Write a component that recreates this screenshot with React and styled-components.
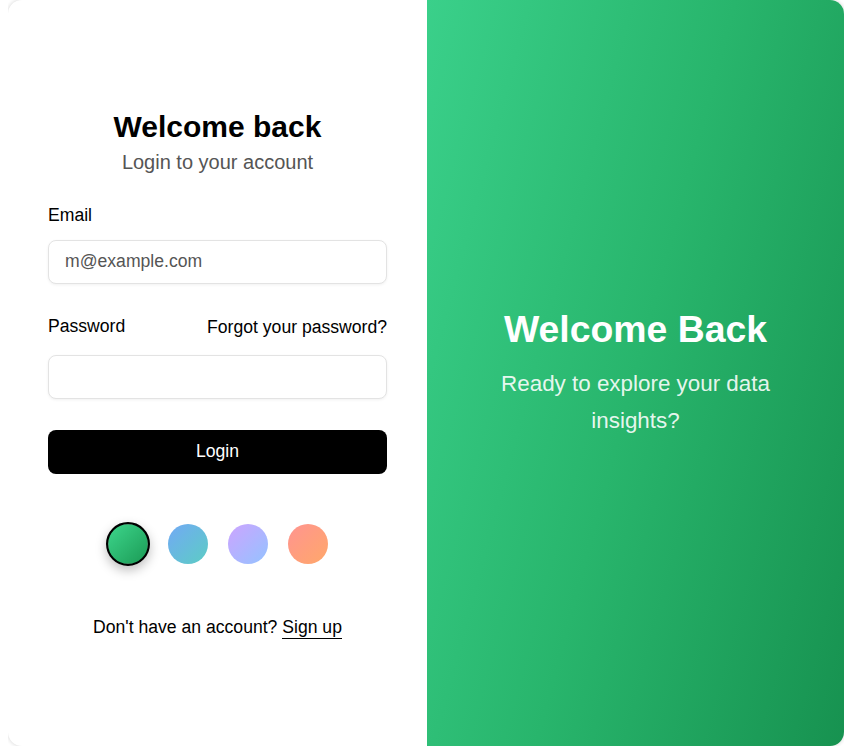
import React, { useState } from "react";
import styled, { createGlobalStyle } from "styled-components";

const GlobalStyle = createGlobalStyle`
  * {
    box-sizing: border-box;
  }

  body {
    margin: 0 0 0 8px;
    font-family: "Liberation Sans", Arial, sans-serif;
    background: #fff;
    overflow: hidden;
  }
`;

const themes = [
  { id: "green", swatch: "linear-gradient(135deg, #3dd68c, #1b9a55)", panel: "linear-gradient(105deg, #3ad08a 0%, #28b56c 50%, #179250 100%)" },
  { id: "blue", swatch: "linear-gradient(135deg, #72a9f5, #5ccdc4)", panel: "linear-gradient(105deg, #72a9f5, #5ccdc4)" },
  { id: "purple", swatch: "linear-gradient(135deg, #cda4ff, #94c3ff)", panel: "linear-gradient(105deg, #cda4ff, #94c3ff)" },
  { id: "peach", swatch: "linear-gradient(135deg, #ff9490, #ffa86a)", panel: "linear-gradient(105deg, #ff9490, #ffa86a)" },
];

const Card = styled.div`
  width: 836px;
  height: 746px;
  display: grid;
  grid-template-columns: 419px 417px;
  border-radius: 14px;
  overflow: hidden;
  background: #fff;
  box-shadow: 0 0 4px rgba(0, 0, 0, 0.18);
`;

const FormSide = styled.div`
  display: flex;
  flex-direction: column;
  justify-content: center;
  padding: 0 40px;
`;

const Header = styled.div`
  display: flex;
  flex-direction: column;
  align-items: center;
  gap: 4px;
  margin-bottom: 30px;
`;

const Title = styled.h1`
  margin: 0;
  font-size: 30px;
  font-weight: 700;
  line-height: 36px;
  color: #000;
`;

const Subtitle = styled.p`
  margin: 0;
  font-size: 20px;
  line-height: 26px;
  color: #555;
`;

const Field = styled.div`
  display: flex;
  flex-direction: column;
  gap: ${(p) => (p.$wide ? "18px" : "15px")};
  margin-bottom: ${(p) => (p.$last ? "31px" : "32px")};
`;

const LabelRow = styled.div`
  display: flex;
  justify-content: space-between;
  align-items: baseline;
`;

const Label = styled.label`
  font-size: 17.6px;
  line-height: 20px;
  color: #000;
`;

const Forgot = styled.a`
  font-size: 17.6px;
  color: #000;
  text-decoration: none;
  position: relative;
  top: 1px;
`;

const Input = styled.input`
  height: 44px;
  width: 100%;
  padding: 0 16px;
  border: 1px solid #e3e3e3;
  border-radius: 8px;
  font-family: inherit;
  font-size: 17.6px;
  box-shadow: 0 1px 3px rgba(0, 0, 0, 0.06);
  outline: none;

  &::placeholder {
    color: #555;
  }
`;

const LoginButton = styled.button`
  height: 44px;
  width: 100%;
  border: none;
  border-radius: 8px;
  background: #000;
  color: #fff;
  font-family: inherit;
  font-size: 17.6px;
  cursor: pointer;
`;

const Swatches = styled.div`
  display: flex;
  justify-content: center;
  gap: 20px;
  margin: 50px 0 53px;
`;

const Swatch = styled.button`
  width: 40px;
  height: 40px;
  padding: 0;
  border-radius: 50%;
  background: ${(p) => p.$bg};
  border: ${(p) => (p.$active ? "2px solid #000" : "none")};
  box-shadow: ${(p) => (p.$active ? "0 4px 10px rgba(0, 0, 0, 0.25)" : "none")};
  transform: ${(p) => (p.$active ? "scale(1.1)" : "none")};
  cursor: pointer;
`;

const Footer = styled.p`
  margin: 0;
  text-align: center;
  font-size: 17.6px;
  color: #000;

  a {
    color: #000;
    text-decoration: none;
    border-bottom: 1px solid #000;
    padding-bottom: 1px;
  }
`;

const Showcase = styled.div`
  display: flex;
  flex-direction: column;
  justify-content: center;
  align-items: center;
  padding: 0 40px;
  background: ${(p) => p.$bg};
  color: #fff;
  text-align: center;
`;

const ShowTitle = styled.h2`
  margin: 0 0 14px;
  font-size: 37.4px;
  font-weight: 700;
  line-height: 44px;
`;

const ShowText = styled.p`
  margin: 0;
  font-size: 22.4px;
  line-height: 37px;
  color: rgba(255, 255, 255, 0.9);
`;

export default function App() {
  const [active, setActive] = useState("green");
  const current = themes.find((t) => t.id === active);

  return (
    <>
      <GlobalStyle />
      <Card>
        <FormSide>
          <Header>
            <Title>Welcome back</Title>
            <Subtitle>Login to your account</Subtitle>
          </Header>
          <Field>
            <Label htmlFor="email">Email</Label>
            <Input id="email" type="email" placeholder="m@example.com" />
          </Field>
          <Field $wide $last>
            <LabelRow>
              <Label htmlFor="password">Password</Label>
              <Forgot href="#">Forgot your password?</Forgot>
            </LabelRow>
            <Input id="password" type="password" />
          </Field>
          <LoginButton>Login</LoginButton>
          <Swatches>
            {themes.map((t) => (
              <Swatch
                key={t.id}
                $bg={t.swatch}
                $active={t.id === active}
                onClick={() => setActive(t.id)}
                aria-label={t.id}
              />
            ))}
          </Swatches>
          <Footer>
            Don't have an account? <a href="#">Sign up</a>
          </Footer>
        </FormSide>
        <Showcase $bg={current.panel}>
          <ShowTitle>Welcome Back</ShowTitle>
          <ShowText>Ready to explore your data insights?</ShowText>
        </Showcase>
      </Card>
    </>
  );
}
